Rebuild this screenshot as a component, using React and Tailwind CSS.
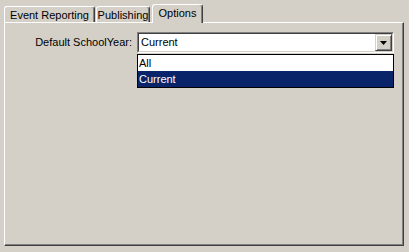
import React from 'react';

const tabs = [
  { label: 'Event Reporting', width: 'w-[91px]' },
  { label: 'Publishing', width: 'w-[54px]' },
];

function Tab({ label, width }) {
  return (
    <div
      className={`${width} h-[16px] mr-[1px] border-l border-t border-r border-l-white border-t-white border-r-[#404040] rounded-t-[3px] shadow-[inset_-1px_0_0_#808080] flex justify-center items-start pt-[2px] leading-[13px]`}
    >
      {label}
    </div>
  );
}

function ComboBox() {
  return (
    <div className="w-[257px] h-[21px] border-t border-l border-t-[#808080] border-l-[#808080] border-r border-b border-r-white border-b-white">
      <div className="h-full border-t border-l border-t-[#404040] border-l-[#404040] border-r border-b border-r-[#d4d0c8] border-b-[#d4d0c8] bg-white flex items-center pl-[2px]">
        <span className="flex-1 leading-[13px]">Current</span>
        <div className="w-[17px] h-[17px] bg-[#d4d0c8] border-t border-l border-t-[#d4d0c8] border-l-[#d4d0c8] border-r border-b border-r-[#404040] border-b-[#404040] shadow-[inset_1px_1px_0_#fff,inset_-1px_-1px_0_#808080] flex items-center justify-center">
          <svg width="7" height="4" viewBox="0 0 7 4">
            <path d="M0 0h7L3.5 4z" fill="#000" />
          </svg>
        </div>
      </div>
    </div>
  );
}

export default function App() {
  return (
    <div
      className="w-[409px] h-[252px] bg-[#d4d0c8] text-[11px] text-black relative"
      style={{ fontFamily: '"Liberation Sans", Arial, sans-serif' }}
    >
      <div className="flex items-end pl-[4px] h-[22px]">
        {tabs.map((t) => (
          <Tab key={t.label} {...t} />
        ))}
        <div className="w-[51px] h-[19px] ml-[1px] -mb-[1px] bg-[#d4d0c8] relative z-10 border-l border-t border-r border-l-white border-t-white border-r-[#404040] rounded-t-[3px] shadow-[inset_-1px_0_0_#808080] flex justify-center items-start pt-[2px] leading-[13px]">
          Options
        </div>
      </div>

      <div className="ml-[4px] w-[400px] h-[224px] border-l border-t border-l-white border-t-white border-r border-b border-r-[#404040] border-b-[#404040] shadow-[inset_-1px_-1px_0_#808080] relative">
        <div className="flex items-center pt-[9px]">
          <div className="w-[127px] text-right leading-[13px]">Default SchoolYear:</div>
          <div className="ml-[5px] relative">
            <ComboBox />
            <div className="absolute left-0 top-[22px] w-[257px] border border-black bg-white z-20">
              <div className="h-[16px] pl-[1px] flex items-center leading-[13px]">All</div>
              <div className="h-[16px] pl-[1px] flex items-center leading-[13px] bg-[#0a246a] text-white">Current</div>
            </div>
          </div>
        </div>
      </div>
    </div>
  );
}
